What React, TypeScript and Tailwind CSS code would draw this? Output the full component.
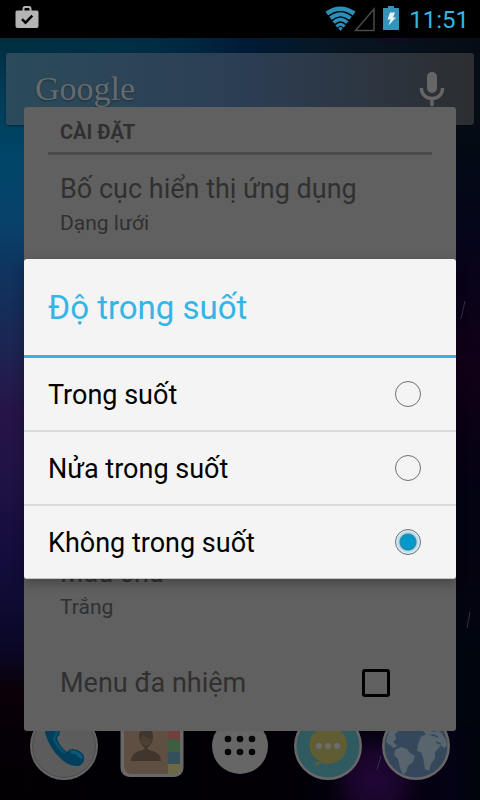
import { useState } from "react";

const OPTIONS = ["Trong suốt", "Nửa trong suốt", "Không trong suốt"];

function Wallpaper() {
  return (
    <svg
      className="absolute inset-0 h-full w-full"
      viewBox="0 38 480 762"
      preserveAspectRatio="none"
      aria-hidden="true"
    >
      <defs>
        <linearGradient id="left" x1="0" y1="38" x2="0" y2="800" gradientUnits="userSpaceOnUse">
          <stop offset="0" stopColor="#002c3e" />
          <stop offset="0.07" stopColor="#003c58" />
          <stop offset="0.16" stopColor="#004669" />
          <stop offset="0.25" stopColor="#08406a" />
          <stop offset="0.3" stopColor="#0e3560" />
          <stop offset="0.4" stopColor="#1b2653" />
          <stop offset="0.49" stopColor="#261447" />
          <stop offset="0.56" stopColor="#211345" />
          <stop offset="0.7" stopColor="#120c3a" />
          <stop offset="0.8" stopColor="#0a0726" />
          <stop offset="0.86" stopColor="#0b0008" />
          <stop offset="0.92" stopColor="#050006" />
          <stop offset="1" stopColor="#020002" />
        </linearGradient>
        <linearGradient id="right" x1="0" y1="38" x2="0" y2="800" gradientUnits="userSpaceOnUse">
          <stop offset="0" stopColor="#081018" />
          <stop offset="0.15" stopColor="#020a14" />
          <stop offset="0.27" stopColor="#06041a" />
          <stop offset="0.44" stopColor="#100016" />
          <stop offset="0.6" stopColor="#030312" />
          <stop offset="0.7" stopColor="#050310" />
          <stop offset="0.8" stopColor="#01060f" />
          <stop offset="1" stopColor="#010408" />
        </linearGradient>
        <linearGradient id="top" x1="0" y1="0" x2="480" y2="0" gradientUnits="userSpaceOnUse">
          <stop offset="0" stopColor="#002c3e" stopOpacity="0" />
          <stop offset="0.28" stopColor="#002c48" stopOpacity="0.4" />
          <stop offset="0.5" stopColor="#001b38" />
          <stop offset="0.7" stopColor="#081622" />
          <stop offset="1" stopColor="#060c14" />
        </linearGradient>
        <linearGradient id="low" x1="0" y1="0" x2="480" y2="0" gradientUnits="userSpaceOnUse">
          <stop offset="0" stopColor="#060006" stopOpacity="0" />
          <stop offset="0.2" stopColor="#010004" />
          <stop offset="0.6" stopColor="#020006" />
          <stop offset="0.95" stopColor="#040214" />
          <stop offset="1" stopColor="#01040a" />
        </linearGradient>
        <radialGradient id="purple">
          <stop offset="0" stopColor="#210638" />
          <stop offset="0.5" stopColor="#180528" />
          <stop offset="1" stopColor="#0c021c" stopOpacity="0" />
        </radialGradient>
      </defs>
      <rect x="0" y="38" width="240" height="762" fill="url(#left)" />
      <rect x="240" y="38" width="240" height="762" fill="url(#right)" />
      <rect x="0" y="38" width="480" height="90" fill="url(#top)" />
      <rect x="0" y="725" width="480" height="75" fill="url(#low)" />
      <ellipse cx="376" cy="780" rx="52" ry="56" fill="url(#purple)" />
      <ellipse cx="396" cy="38" rx="26" ry="5" fill="url(#purple)" opacity="0.7" />
      <path d="M465 301l-4 18M470 612l-3 16M381 756l-4 14" stroke="#3f3560" strokeWidth="1" opacity="0.8" />
    </svg>
  );
}

function StatusBar() {
  return (
    <header className="flex h-[38px] w-full items-center bg-black pl-[15px] pr-[11px]">
      <svg className="mb-1 h-6 w-6" viewBox="0 0 24 24" aria-label="Play Store">
        <path
          fill="#b4b4b4"
          fillRule="evenodd"
          d="M7.500 5.500V3.500Q7.500 1 10 1h4q2.500 0 2.500 2.500v2H22q1.500 0 1.500 1.500v14q0 2-2 2h-19q-2 0-2-2V7Q.5 5.500 2 5.500zM9.500 5.500h5V3.700q0-.7-.7-.7h-3.600q-.7 0-.7.7z"
        />
        <path d="M7 14.200l3.500 3.500 6.800-7" fill="none" stroke="#000" strokeWidth="2.400" />
      </svg>
      <div className="ml-auto flex items-center">
        <svg className="h-[26px] w-[50px]" viewBox="0 0 50 26" aria-label="Wi-Fi">
          <g fill="none" stroke="#2b8fb8">
            <path d="M1.800 7.500Q15.500 -2 29.200 7.500" strokeWidth="4.600" />
            <path d="M5.500 12.300Q15.500 4.200 25.500 12.300" strokeWidth="4" />
            <path d="M8.600 16.500Q15.500 10.200 22.400 16.500" strokeWidth="3.600" />
            <path d="M11.400 20.500Q15.500 16 19.600 20.500" strokeWidth="3.200" />
          </g>
          <path d="M13.200 22Q15.500 20 17.800 22L15.500 25z" fill="#2b8fb8" />
          <path d="M30.500 24.500H49V3z" fill="none" stroke="#4a4a4a" strokeWidth="1.500" />
        </svg>
        <svg className="mb-0.5 ml-2 h-6 w-4" viewBox="0 0 16 24" aria-label="Pin">
          <path d="M5 0h6v2h5v22H0V2h5z" fill="#3593ba" />
          <path d="M7 6.500h5l-2 5h3l-7.500 8 2-6H4.500z" fill="#e4f3f9" />
        </svg>
        <time className="ml-2.5 pt-0.5 text-2xl leading-9 text-[#33b5e5]">11:51</time>
      </div>
    </header>
  );
}

function SearchBar() {
  return (
    <div className="mx-1.5 mt-[15px] flex h-[72px] items-center justify-between rounded-[3px] bg-gradient-to-r from-[#2b4b5a] via-[#2c3e54] to-[#2c2e31] pl-[29px] pr-7 shadow-[0_1px_2px_rgba(0,0,0,0.4)]">
      <span className="font-['Liberation_Serif',serif] text-[34px] leading-[72px] text-[#666a6d] [text-shadow:0_1px_2px_rgba(0,0,0,0.35)]">
        Google
      </span>
      <button type="button" aria-label="Tìm kiếm bằng giọng nói">
        <svg className="h-[34px] w-7" viewBox="0 0 28 34">
          <rect x="9" y="0" width="10" height="21" rx="5" fill="#666" />
          <path d="M3.500 16v1a10.500 9.500 0 0 0 21 0v-1M14 26.500V34" fill="none" stroke="#666" strokeWidth="3.400" />
        </svg>
      </button>
    </div>
  );
}

function PhoneIcon() {
  return (
    <>
      <circle cx="35" cy="35" r="34" fill="#656565" />
      <circle cx="35" cy="35" r="31.500" fill="#5c5c5c" stroke="#484848" strokeWidth="0.800" />
      <path
        d="M16 22q0-6 6-7 7-1 9 5 0 4-3 7 2 8 10 14 2-3 6-3 8 1 11 7 1 8-5 10-10 1-19-8-10-9-15-25z"
        fill="#033f5b"
      />
      <path d="M20 19q5-3 8 2l-3 7q4 9 11 14" fill="none" stroke="#06526f" strokeWidth="2.500" />
      <path d="M43 41q5 0 9 5" stroke="#075a7a" strokeWidth="3.500" strokeLinecap="round" fill="none" />
    </>
  );
}

function ContactsIcon() {
  return (
    <>
      <rect x="3.500" y="3" width="63" height="63" rx="9" fill="#686868" />
      <path d="M15 7h36v56H15q-8 0-8-8V15q0-8 8-8z" fill="#5f4f42" />
      <path d="M51 7h5q7 0 7 7v15H51z" fill="#713f3c" />
      <path d="M51 29h12v12H51z" fill="#3f5e41" />
      <path d="M51 41h12v12H51z" fill="#35505d" />
      <path d="M51 53h12v3q0 7-7 7h-5z" fill="#6b6843" />
      <path d="M14 50q0-9 12-11l2-2q-6-4-6-12 0-7 7-7t7 7q0 8-6 12l2 2q12 2 12 11z" fill="#41362d" />
      <path d="M23 28q1 7 6 7t6-7q-6 0-8-4z" fill="#4c4035" />
    </>
  );
}

function AppsIcon() {
  return (
    <>
      <circle cx="35" cy="35" r="28" fill="#666" />
      {[28, 41].map((y) =>
        [23, 35, 47].map((x) => <circle key={`${x}-${y}`} cx={x} cy={y} r="3.300" fill="#050508" />),
      )}
    </>
  );
}

function MessageIcon() {
  return (
    <>
      <circle cx="35" cy="35" r="34" fill="#686868" />
      <circle cx="35" cy="35" r="31.500" fill="#2f5a60" />
      <path d="M28 51q-11-5-12-17 1-16 19-18 18 1 19 18-1 17-19 19-4 0-6-1-3 2-8 3 3-3 1-4z" fill="#605c34" />
      <circle cx="26" cy="35" r="3" fill="#6d6d6d" />
      <circle cx="35" cy="35" r="3" fill="#6d6d6d" />
      <circle cx="44" cy="35" r="3" fill="#6d6d6d" />
    </>
  );
}

function GlobeIcon() {
  return (
    <>
      <circle cx="35" cy="35" r="34" fill="#666" />
      <circle cx="35" cy="35" r="31.500" fill="#35485b" />
      <path
        d="M8 19Q14 12 24 11l-5 8-5 4 1 5-3 3 4 4-3 2-8-6z"
        fill="#58656e"
      />
      <path
        d="M14 39l6-3 6 2 3 4 5 3-2 6-5 4-2 6-3 3-3-7-2-9-4-4z"
        fill="#58656e"
      />
      <path
        d="M37 33l3-7 5-3 8 2 8-2 4 6 1 6-3 2-3-3-3 4-3 3v6l-4 6-2 7-4-2-2-12-2-5-4-1z"
        fill="#58656e"
      />
      <path d="M42 20l6-1 4 2 6-1 3 3-5 2-4-2-6 1z" fill="#58656e" />
      <path d="M55 31l5 2M52 24l5 2" stroke="#35485b" strokeWidth="1.500" />
    </>
  );
}

const DOCK = [
  { label: "Điện thoại", Icon: PhoneIcon },
  { label: "Danh bạ", Icon: ContactsIcon },
  { label: "Ứng dụng", Icon: AppsIcon },
  { label: "Tin nhắn", Icon: MessageIcon },
  { label: "Trình duyệt", Icon: GlobeIcon },
];

function Dock() {
  return (
    <nav className="mt-auto grid grid-cols-5 px-5 pb-[19px]">
      {DOCK.map(({ label, Icon }) => (
        <button key={label} type="button" aria-label={label} className="flex justify-center">
          <svg className="h-[70px] w-[70px]" viewBox="0 0 70 70">
            <Icon />
          </svg>
        </button>
      ))}
    </nav>
  );
}

function SettingsSheet() {
  const [multitask, setMultitask] = useState(false);
  return (
    <section className="relative mx-6 flex h-[624px] flex-col self-center rounded-[3px] bg-[#606060] text-[#303030] [grid-area:1/1]">
      <h2 className="mx-6 border-b-[3px] border-[#4a4a4a] pl-3 pt-2 text-xl font-bold leading-[34px] pb-[3px]">
        CÀI ĐẶT
      </h2>
      <div className="px-9 pt-4">
        <p className="text-[27px] leading-9">Bố cục hiển thị ứng dụng</p>
        <p className="text-[21px] leading-8">Dạng lưới</p>
      </div>
      <div className="mt-auto px-9">
        <p className="text-[27px] leading-9">Màu chữ</p>
        <p className="text-[21px] leading-8">Trắng</p>
      </div>
      <label className="flex h-24 items-center justify-between pl-9 pr-[66px] mt-3 text-[27px]">
        Menu đa nhiệm
        <input
          type="checkbox"
          checked={multitask}
          onChange={(e) => setMultitask(e.target.checked)}
          className="h-7 w-7 appearance-none rounded-[3px] border-[3px] border-black checked:bg-[#0099cc]"
        />
      </label>
    </section>
  );
}

function TransparencyDialog() {
  const [selected, setSelected] = useState(2);
  return (
    <div
      role="dialog"
      aria-labelledby="dialog-title"
      className="relative mx-6 self-center rounded-[3px] border-b border-[#c4c4c4] bg-[#f4f4f4] shadow-[0_4px_12px_rgba(0,0,0,0.3)] [grid-area:1/1]"
    >
      <h1
        id="dialog-title"
        className="border-b-[3px] border-[#33b5e5] px-6 pt-0.5 text-[33px] leading-[94px] text-[#33b5e5]"
      >
        Độ trong suốt
      </h1>
      <div className="divide-y-2 divide-[#dadada]">
        {OPTIONS.map((option, i) => (
          <label
            key={option}
            className="flex h-[74px] items-center justify-between pl-6 pr-[35px] text-[27px] text-black last:h-[72px]"
          >
            <span className="pt-[3px]">{option}</span>
            <input
              type="radio"
              name="transparency"
              checked={selected === i}
              onChange={() => setSelected(i)}
              className="h-[26px] w-[26px] appearance-none rounded-full border border-[#707070] checked:bg-[radial-gradient(circle,#0099cc_0,#0099cc_7px,#4a7f94_8px,#a8d8ea_9px,#e0f0f6_12px)]"
            />
          </label>
        ))}
      </div>
    </div>
  );
}

export default function App() {
  return (
    <div className="flex min-h-screen w-full flex-col bg-black font-[Roboto,sans-serif]">
      <StatusBar />
      <main className="relative grid flex-1">
        <Wallpaper />
        <div className="relative flex flex-col [grid-area:1/1]">
          <SearchBar />
          <Dock />
        </div>
        <SettingsSheet />
        <TransparencyDialog />
      </main>
    </div>
  );
}
